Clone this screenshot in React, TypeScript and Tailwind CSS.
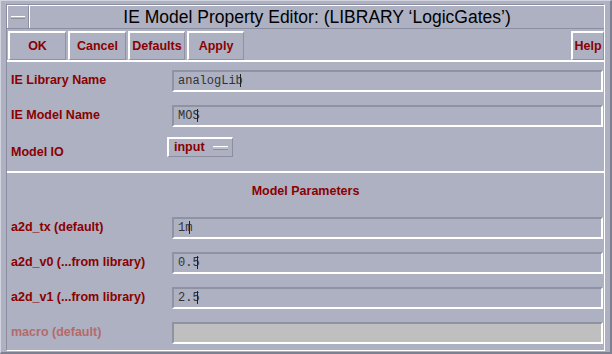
import React from 'react';

const sans = { fontFamily: '"Liberation Sans", Arial, Helvetica, sans-serif' };
const mono = { fontFamily: '"Liberation Mono", "Courier New", monospace' };

function Caret() {
  return <span className="inline-block w-[1px] h-[13px] bg-[#222] -ml-[3px] align-middle" />;
}

function Field({ value, disabled }: { value?: string; disabled?: boolean }) {
  return (
    <div
      className={
        'flex-1 h-[22px] flex items-center pl-[4px] border-t-2 border-l-2 border-b-2 border-r-2 border-t-[#8e92a2] border-l-[#8e92a2] border-b-white border-r-white text-[12px] text-[#333] ' +
        (disabled ? 'bg-[#bfbfbf]' : 'bg-[#adb1c2]')
      }
      style={mono}
    >
      {value}
      {value && <Caret />}
    </div>
  );
}

function Row({ label, children, disabled }: { label: string; children: React.ReactNode; disabled?: boolean }) {
  return (
    <div className="h-[35px] flex items-center pr-[1px]">
      <div
        className={'w-[165px] pl-[4px] text-[12.5px] font-bold ' + (disabled ? 'text-[#b56a6a]' : 'text-[#8b0000]')}
        style={sans}
      >
        {label}
      </div>
      {children}
    </div>
  );
}

function ToolButton({ label, w }: { label: string; w: string }) {
  return (
    <button
      className={
        w +
        ' h-[29px] border-t-2 border-l-2 border-white border-b border-r border-b-[#8e92a2] border-r-[#8e92a2] text-[12.5px] font-bold text-[#8b0000] flex items-center justify-center'
      }
      style={sans}
    >
      {label}
    </button>
  );
}

export default function App() {
  return (
    <div className="w-[612px] h-[354px] bg-[#adb1c2] overflow-hidden" style={sans}>
      <div className="w-full h-full border-t border-l border-[#d2d5e0] border-b-2 border-r-2 border-b-[#7c8090] border-r-[#7c8090] pt-[3px] pl-[5px] pr-[5px] pb-[6px] flex flex-col">
        <div className="flex-1 flex flex-col border-l border-t border-[#8a8e9e] border-r border-b border-r-white border-b-white">
          {/* title bar */}
          <div className="h-[24px] flex border-b border-b-[#8a8e9e]">
            <div className="w-[22px] flex items-center justify-center border-r border-r-[#8a8e9e] border-t border-l border-white">
              <div className="w-[14px] h-[3px] border-t border-white border-b border-b-[#8a8e9e] bg-[#b5b9c9]" />
            </div>
            <div className="flex-1 flex items-center justify-center text-[17.5px] text-black border-t border-l border-white">
              IE Model Property Editor: (LIBRARY ‘LogicGates’)
            </div>
          </div>

          {/* buttons */}
          <div className="h-[33px] flex items-end gap-[2px] pl-[1px] pr-[0px] border-b-2 border-b-white">
            <ToolButton label="OK" w="w-[58px]" />
            <ToolButton label="Cancel" w="w-[58px]" />
            <ToolButton label="Defaults" w="w-[57px]" />
            <ToolButton label="Apply" w="w-[57px]" />
            <div className="flex-1" />
            <ToolButton label="Help" w="w-[33px]" />
          </div>

          {/* library section */}
          <div className="pt-[1px] pb-[2px] border-b-2 border-b-white">
            <Row label="IE Library Name">
              <Field value="analogLib" />
            </Row>
            <Row label="IE Model Name">
              <Field value="MOS" />
            </Row>
            <div className="h-[36px] flex items-start">
              <div className="w-[160px] pl-[4px] pt-[10px] text-[12.5px] font-bold text-[#8b0000]">Model IO</div>
              <div className="w-[66px] h-[20px] mt-[4px] flex items-center pl-[5px] gap-[8px] border-t-2 border-l-2 border-white border-b border-r border-b-[#8a8e9e] border-r-[#8a8e9e]">
                <span className="text-[12.5px] font-bold text-[#8b0000]">input</span>
                <span className="w-[15px] h-[4px] border-t border-white border-b border-b-[#8a8e9e] bg-[#bcc0cf]" />
              </div>
            </div>
          </div>

          {/* parameters */}
          <div className="h-[37px] flex items-center justify-center text-[12.5px] font-bold text-[#8b0000]">
            Model Parameters
          </div>
          <Row label="a2d_tx (default)">
            <Field value="1m" />
          </Row>
          <Row label="a2d_v0 (...from library)">
            <Field value="0.5" />
          </Row>
          <Row label="a2d_v1 (...from library)">
            <Field value="2.5" />
          </Row>
          <Row label="macro (default)" disabled>
            <Field disabled />
          </Row>
        </div>
      </div>
    </div>
  );
}
